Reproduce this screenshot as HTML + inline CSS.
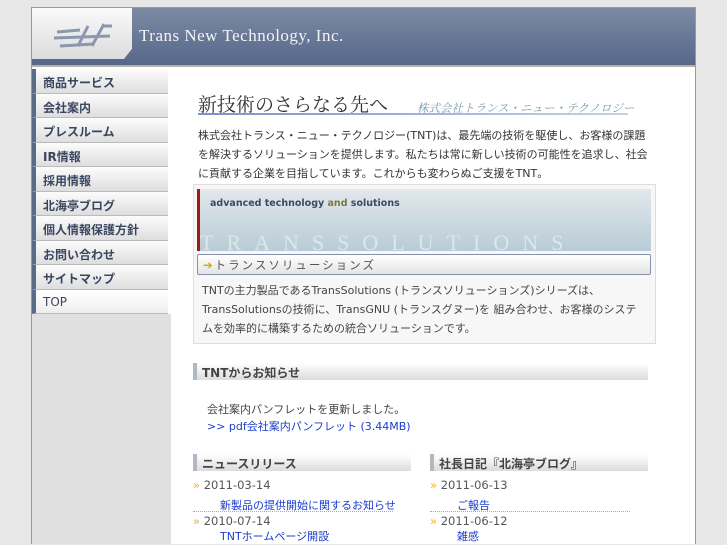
<!DOCTYPE html>
<html><head><meta charset="utf-8"><style>
*{margin:0;padding:0;box-sizing:border-box}
html,body{width:727px;height:545px;overflow:hidden}
body{background:#e7e7e7;font-family:"DejaVu Sans","Noto Sans CJK JP",sans-serif;position:relative}
#box{position:absolute;left:31px;top:7px;width:665px;height:537px;background:#fff;border:1px solid #999;border-bottom:none;overflow:hidden}
#hdr{position:absolute;left:0;top:0;width:663px;height:59px;background:linear-gradient(#7c8aa2,#56678a);border-bottom:2px solid #b8b0a0}
#logo{position:absolute;left:0;top:0;width:100px;height:51px;background:linear-gradient(#fafafa,#dcdcdc);clip-path:polygon(0 0,100% 0,100% 80%,92% 100%,0 100%)}
#ttl{position:absolute;left:107px;top:18px;color:#f2f4f8;font:17px "Liberation Serif",serif;letter-spacing:.5px}
#nav{position:absolute;left:0;top:61px;width:136px}
#nav div{height:24.5px;border-left:4px solid #5a6b88;background:linear-gradient(#fcfcfc,#dedede);border-bottom:1px solid #bbb;font-size:12px;font-weight:bold;color:#3a4660;padding:5px 0 0 7px}
#nav div.t{font-weight:normal;background:linear-gradient(#fff,#eee)}
#gray{position:absolute;left:0;top:306px;width:139px;height:232px;background:#e0e0e0}
.c{position:absolute;font-size:11.5px;color:#333;white-space:nowrap}
.sec{position:absolute;height:17px;border-left:4px solid #b0b8c4;background:linear-gradient(#fff,#dcdcdc);font-size:12px;font-weight:bold;color:#444;padding:1px 0 0 5px}
a{color:#1a3ccc;text-decoration:none}
</style></head><body>
<div id="box">
<div id="hdr"><div id="logo"><svg width="100" height="50"><g stroke="#8a97ad" stroke-width="3" fill="none"><path d="M25 24 L48 22 M22 30 L78 28 M28 38 L62 36"/><path d="M46 38 L56 18 M60 38 L72 16 M70 18 L80 18"/></g></svg></div><div id="ttl">Trans New Technology, Inc.</div></div>
<div id="nav"><div>商品サービス</div><div>会社案内</div><div>プレスルーム</div><div>IR情報</div><div>採用情報</div><div>北海亭ブログ</div><div>個人情報保護方針</div><div>お問い合わせ</div><div>サイトマップ</div><div class="t">TOP</div></div>
<div id="gray"></div>
</div>
<div class="c" style="left:198px;top:90px;font:19px 'Liberation Serif','Noto Serif CJK SC',serif;color:#333">新技術のさらなる先へ</div>
<div class="c" style="left:417px;top:100px;font:italic 11.5px 'Liberation Serif','Noto Serif CJK SC',serif;color:#7a9aa8">株式会社トランス・ニュー・テクノロジー</div>
<div style="position:absolute;left:198px;top:113px;width:430px;height:2px;background:linear-gradient(90deg,#8090c8,#c8d0e8)"></div>
<div class="c" style="left:198px;top:126px;width:452px;line-height:19px;font-size:11px;white-space:normal;height:57px;overflow:hidden">株式会社トランス・ニュー・テクノロジー(TNT)は、最先端の技術を駆使し、お客様の課題を解決するソリューションを提供します。私たちは常に新しい技術の可能性を追求し、社会に貢献する企業を目指しています。これからも変わらぬご支援をTNT。</div>
<div style="position:absolute;left:193px;top:184px;width:463px;height:160px;border:1px solid #ddd;background:#f7f7f7"></div>
<div style="position:absolute;left:197px;top:189px;width:454px;height:62px;background:linear-gradient(#e2e8ec,#b8ccd6);border-left:3px solid #a01818"></div>
<div class="c" style="left:210px;top:198px;font-size:9.5px;font-weight:bold;color:#3a4a66">advanced technology <span style="color:#7a7a40">and</span> solutions</div>
<div class="c" style="left:200px;top:230px;font:22px 'Liberation Serif',serif;color:#dfe6ea;letter-spacing:13px">TRANSSOLUTIONS</div>
<div style="position:absolute;left:197px;top:254px;width:454px;height:21px;border:1px solid #8890b0;border-radius:2px;background:linear-gradient(#fff,#e4e4e4)"></div>
<div class="c" style="left:203px;top:257px;font-size:11.5px;color:#555;letter-spacing:2px"><span style="color:#e0a000">➔</span>トランスソリューションズ</div>
<div class="c" style="left:202px;top:281px;width:445px;line-height:19px;font-size:11px;color:#444;white-space:normal">TNTの主力製品であるTransSolutions (トランスソリューションズ)シリーズは、TransSolutionsの技術に、TransGNU (トランスグヌー)を 組み合わせ、お客様のシステムを効率的に構築するための統合ソリューションです。</div>
<div class="sec" style="left:193px;top:363px;width:455px">TNTからお知らせ</div>
<div class="c" style="left:207px;top:401px;font-size:11px;color:#444">会社案内パンフレットを更新しました。</div>
<div class="c" style="left:207px;top:418px;font-size:11px;color:#1a3ccc">&gt;&gt; pdf会社案内パンフレット (3.44MB)</div>
<div class="sec" style="left:193px;top:454px;width:218px">ニュースリリース</div>
<div class="sec" style="left:430px;top:454px;width:218px">社長日記『北海亭ブログ』</div>
<div class="c" style="left:193px;top:478px;color:#555"><span style="color:#f0b030">»</span> 2011-03-14</div>
<div class="c" style="left:220px;top:497px;font-size:11px"><a>新製品の提供開始に関するお知らせ</a></div>
<div style="position:absolute;left:193px;top:511px;width:200px;border-top:1px dotted #aaa"></div>
<div class="c" style="left:193px;top:514px;color:#555"><span style="color:#f0b030">»</span> 2010-07-14</div>
<div class="c" style="left:220px;top:530px;font-size:11px;line-height:14px"><a>TNTホームページ開設</a></div>
<div class="c" style="left:430px;top:478px;color:#555"><span style="color:#f0b030">»</span> 2011-06-13</div>
<div class="c" style="left:457px;top:497px;font-size:11px"><a>ご報告</a></div>
<div style="position:absolute;left:430px;top:511px;width:200px;border-top:1px dotted #aaa"></div>
<div class="c" style="left:430px;top:514px;color:#555"><span style="color:#f0b030">»</span> 2011-06-12</div>
<div class="c" style="left:457px;top:530px;font-size:11px;line-height:14px"><a>雑感</a></div>
</body></html>
